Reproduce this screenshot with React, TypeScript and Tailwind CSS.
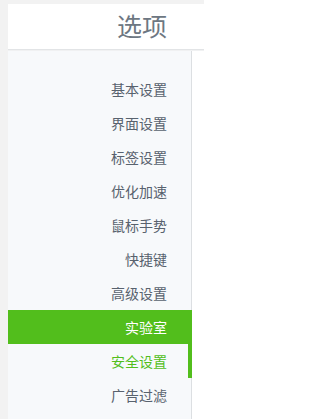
import React from "react";

const items = ["基本设置", "界面设置", "标签设置", "优化加速", "鼠标手势", "快捷键", "高级设置", "实验室", "安全设置", "广告过滤"];

export default function App() {
  return (
    <div
      className="w-[204px] h-[419px] overflow-hidden bg-[#f2f2f2] pt-[4px] pl-[8px] flex flex-col"
      style={{ fontFamily: '"Noto Sans CJK SC", "Noto Sans", sans-serif' }}
    >
      <div className="h-[46px] shrink-0 bg-white border-b border-[#e2e4e6] flex items-center justify-end pr-[37px] pb-[3px]">
        <span className="text-[25px] leading-none text-[#6d7782]">选项</span>
      </div>
      <div className="flex-1 flex bg-white border-t border-[#f0f1f2]">
        <div className="w-[184px] bg-[#f7f9fb] border-r border-[#dcdfe2] pt-[21px]">
          {items.map((t) => {
            const active = t === "实验室";
            const hover = t === "安全设置";
            return (
              <div
                key={t}
                className={
                  "h-[34px] flex items-center justify-end text-[14px] " +
                  (active
                    ? "bg-[#52be1c] text-white mr-[-1px] pr-[25px]"
                    : hover
                    ? "text-[#52be1c] border-r-[4px] border-[#52be1c] mr-[-1px] pr-[21px]"
                    : "text-[#58626e] pr-[24px]")
                }
              >
                {t}
              </div>
            );
          })}
        </div>
        <div className="flex-1 bg-white" />
      </div>
    </div>
  );
}
